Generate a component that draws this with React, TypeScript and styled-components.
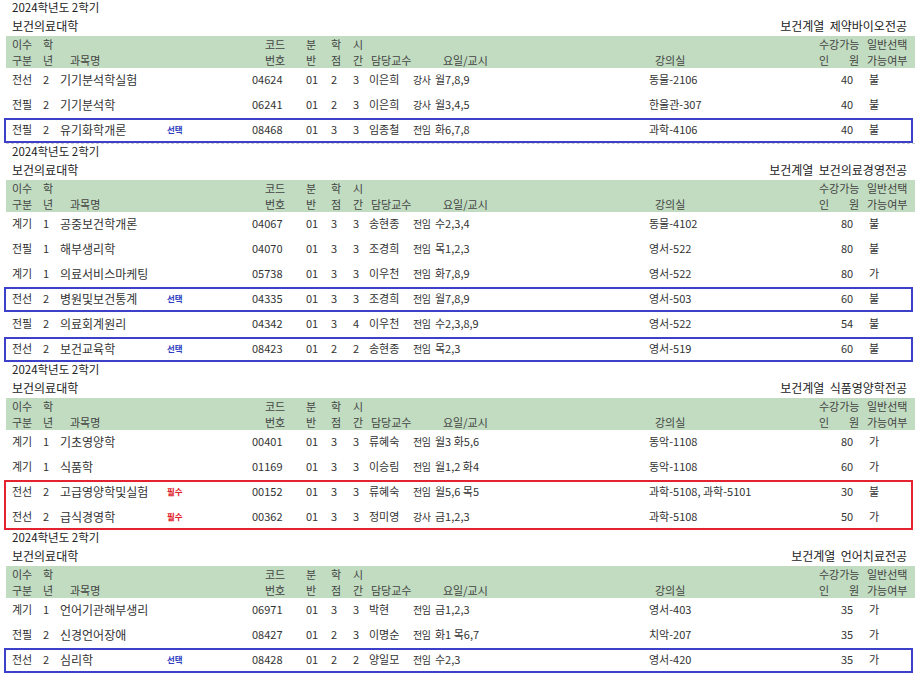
import React from "react";
import styled, { createGlobalStyle } from "styled-components";

const Global = createGlobalStyle`
  body { margin: 0; background: #fff; font-family: "Noto Sans CJK KR", "Noto Sans", sans-serif; color: #333; }
`;

const COLS = "31px 17px 107px 85px 54px 24px 22px 17px 44px 22px 214px 180px 38px 1fr";

const Page = styled.div`
  width: 909px;
  margin-left: 6px;
`;
const Section = styled.section<{ $dashed?: boolean }>`
  border-bottom: ${p => (p.$dashed ? "1px dashed #ccc" : "none")};
  box-sizing: border-box;
`;
const Year = styled.div`
  height: 17px;
  line-height: 15px;
  font-size: 11.5px;
  padding-left: 6px;
  color: #222;
`;
const TitleLine = styled.div`
  display: flex;
  justify-content: space-between;
  height: 18px;
  line-height: 18px;
  font-size: 12px;
  padding: 0 8px 0 6px;
  margin-bottom: 1px;
  color: #222;
`;
const Grid = styled.div`
  display: grid;
  grid-template-columns: ${COLS};
  padding-left: 6px;
`;
const Header = styled(Grid)`
  background: #c1dcc1;
  height: 32px;
  font-size: 11px;
  color: #444;
`;
const HCell = styled.div<{ $pad?: number; $shift?: number }>`
  display: flex;
  flex-direction: column;
  justify-content: flex-end;
  line-height: 16px;
  padding-left: ${p => p.$pad || 0}px;
  margin-left: ${p => p.$shift || 0}px;
  white-space: nowrap;
`;
const Spread = styled.span`
  display: flex;
  justify-content: space-between;
  width: 40px;
`;
const Row = styled(Grid)`
  height: 25px;
  align-items: center;
  padding-bottom: 3px;
  box-sizing: border-box;
  font-size: 11px;
  color: #333;
`;
const Cell = styled.div<{ $pad?: number }>`
  white-space: nowrap;
  padding-left: ${p => p.$pad || 0}px;
`;
const Role = styled.div`
  white-space: nowrap;
  font-size: 10px;
  letter-spacing: -0.5px;
`;
const Name = styled.div`
  font-size: 12px;
  white-space: nowrap;
`;
const Tag = styled.div<{ $req?: boolean }>`
  font-size: 8.5px;
  font-weight: bold;
  color: ${p => (p.$req ? "#e0202a" : "#3040c0")};
`;
const Box = styled.div<{ $red?: boolean }>`
  outline: 2.5px solid ${p => (p.$red ? "#e52230" : "#3d40c8")};
  outline-offset: -2px;
  margin: 0 2px 0 -2px;
  padding-left: 2px;
`;

type R = [string, string, string, string, string, string, string, string, string, string, string, string, string];
type Grp = { rows: R[]; box?: "blue" | "red"; tag?: string };

const data: { major: string; groups: Grp[]; dashed?: boolean }[] = [
  {
    major: "보건계열  제약바이오전공",
    dashed: true,
    groups: [
      { rows: [["전선", "2", "기기분석학실험", "04624", "01", "2", "3", "이은희", "강사", "월7,8,9", "동물-2106", "40", "불"], ["전필", "2", "기기분석학", "06241", "01", "2", "3", "이은희", "강사", "월3,4,5", "한울관-307", "40", "불"]] },
      { box: "blue", tag: "선택", rows: [["전필", "2", "유기화학개론", "08468", "01", "3", "3", "임종철", "전임", "화6,7,8", "과학-4106", "40", "불"]] },
    ],
  },
  {
    major: "보건계열  보건의료경영전공",
    groups: [
      { rows: [["계기", "1", "공중보건학개론", "04067", "01", "3", "3", "송현종", "전임", "수2,3,4", "동물-4102", "80", "불"], ["전필", "1", "해부생리학", "04070", "01", "3", "3", "조경희", "전임", "목1,2,3", "영서-522", "80", "불"], ["계기", "1", "의료서비스마케팅", "05738", "01", "3", "3", "이우천", "전임", "화7,8,9", "영서-522", "80", "가"]] },
      { box: "blue", tag: "선택", rows: [["전선", "2", "병원및보건통계", "04335", "01", "3", "3", "조경희", "전임", "월7,8,9", "영서-503", "60", "불"]] },
      { rows: [["전필", "2", "의료회계원리", "04342", "01", "3", "4", "이우천", "전임", "수2,3,8,9", "영서-522", "54", "불"]] },
      { box: "blue", tag: "선택", rows: [["전선", "2", "보건교육학", "08423", "01", "2", "2", "송현종", "전임", "목2,3", "영서-519", "60", "불"]] },
    ],
  },
  {
    major: "보건계열  식품영양학전공",
    groups: [
      { rows: [["계기", "1", "기초영양학", "00401", "01", "3", "3", "류혜숙", "전임", "월3 화5,6", "동악-1108", "80", "가"], ["계기", "1", "식품학", "01169", "01", "3", "3", "이승림", "전임", "월1,2 화4", "동악-1108", "60", "가"]] },
      { box: "red", tag: "필수", rows: [["전선", "2", "고급영양학및실험", "00152", "01", "3", "3", "류혜숙", "전임", "월5,6 목5", "과학-5108, 과학-5101", "30", "불"], ["전선", "2", "급식경영학", "00362", "01", "3", "3", "정미영", "강사", "금1,2,3", "과학-5108", "50", "가"]] },
    ],
  },
  {
    major: "보건계열  언어치료전공",
    groups: [
      { rows: [["계기", "1", "언어기관해부생리", "06971", "01", "3", "3", "박현", "전임", "금1,2,3", "영서-403", "35", "가"], ["전필", "2", "신경언어장애", "08427", "01", "2", "3", "이명순", "전임", "화1 목6,7", "치악-207", "35", "가"]] },
      { box: "blue", tag: "선택", rows: [["전선", "2", "심리학", "08428", "01", "2", "2", "양일모", "전임", "수2,3", "영서-420", "35", "가"]] },
    ],
  },
];

function DataRow({ r, tag }: { r: R; tag?: string }) {
  return (
    <Row>
      <Cell>{r[0]}</Cell>
      <Cell>{r[1]}</Cell>
      <Name>{r[2]}</Name>
      <Tag $req={tag === "필수"}>{tag}</Tag>
      <Cell>{r[3]}</Cell>
      <Cell>{r[4]}</Cell>
      <Cell $pad={1}>{r[5]}</Cell>
      <Cell $pad={1}>{r[6]}</Cell>
      <Cell>{r[7]}</Cell>
      <Role>{r[8]}</Role>
      <Cell>{r[9]}</Cell>
      <Cell>{r[10]}</Cell>
      <Cell $pad={12}>{r[11]}</Cell>
      <Cell $pad={2}>{r[12]}</Cell>
    </Row>
  );
}

function HeadRow() {
  return (
    <Header>
      <HCell><span>이수</span><span>구분</span></HCell>
      <HCell><span>학</span><span>년</span></HCell>
      <HCell $pad={10}><span>과목명</span></HCell>
      <HCell />
      <HCell $pad={13}><span>코드</span><span>번호</span></HCell>
      <HCell><span>분</span><span>반</span></HCell>
      <HCell $pad={1}><span>학</span><span>점</span></HCell>
      <HCell $pad={1}><span>시</span><span>간</span></HCell>
      <HCell $pad={2}><span>담당교수</span></HCell>
      <HCell />
      <HCell $pad={8}><span>요일/교시</span></HCell>
      <HCell $pad={6}><span>강의실</span></HCell>
      <HCell $shift={-10}><span>수강가능</span><Spread><span>인</span><span>원</span></Spread></HCell>
      <HCell><span>일반선택</span><span>가능여부</span></HCell>
    </Header>
  );
}

export default function App() {
  return (
    <>
      <Global />
      <Page>
        {data.map((s, i) => (
          <Section key={i} $dashed={s.dashed}>
            <Year>2024학년도 2학기</Year>
            <TitleLine><span>보건의료대학</span><span style={{ whiteSpace: "pre" }}>{s.major}</span></TitleLine>
            <HeadRow />
            {s.groups.map((g, j) =>
              g.box ? (
                <Box key={j} $red={g.box === "red"}>
                  {g.rows.map((r, k) => <DataRow key={k} r={r} tag={g.tag} />)}
                </Box>
              ) : (
                <div key={j}>{g.rows.map((r, k) => <DataRow key={k} r={r} />)}</div>
              )
            )}
          </Section>
        ))}
      </Page>
    </>
  );
}
